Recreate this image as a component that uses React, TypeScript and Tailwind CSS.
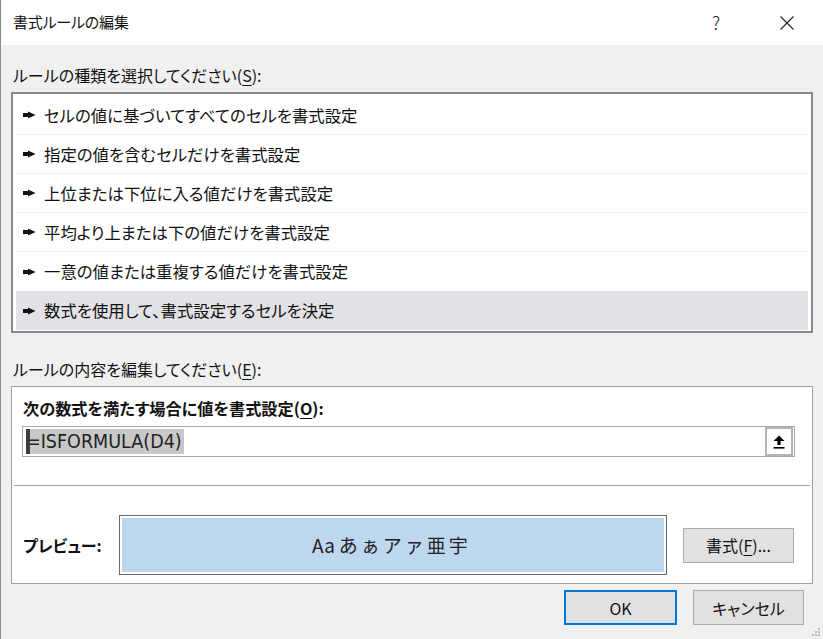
import type { ReactNode } from 'react'

const ruleTypes = [
  'セルの値に基づいてすべてのセルを書式設定',
  '指定の値を含むセルだけを書式設定',
  '上位または下位に入る値だけを書式設定',
  '平均より上または下の値だけを書式設定',
  '一意の値または重複する値だけを書式設定',
  '数式を使用して、書式設定するセルを決定',
]

const selectedIndex = 5

function Pointer() {
  return (
    <svg width="13" height="8" viewBox="0 0 13 8" className="shrink-0">
      <polygon points="0,2 5,2 5,0.5 12.5,4 5,7.5 5,6 0,6" fill="#111" />
    </svg>
  )
}

function Mnemonic({ children }: { children: ReactNode }) {
  return <span className="underline underline-offset-[3px]">{children}</span>
}

function WinButton({
  children,
  className = '',
}: {
  children: ReactNode
  className?: string
}) {
  return (
    <button
      type="button"
      className={`flex items-center justify-center bg-[#e1e1e1] text-[16px] text-[#111] ${className}`}
    >
      {children}
    </button>
  )
}

export default function App() {
  return (
    <div className="relative flex h-[639px] w-[823px] flex-col overflow-hidden border-l border-[#8a8a8a] bg-[#f0f0f0] font-['Noto_Sans_CJK_JP','Noto_Sans',sans-serif] text-[#111] [font-feature-settings:'palt']">
      {/* title bar */}
      <div className="flex h-[45px] shrink-0 items-center bg-white pl-[12px]">
        <span className="text-[15px] tracking-[-0.2px]">書式ルールの編集</span>
        <span className="ml-auto mr-[60px] text-[18px] font-light text-[#222]">?</span>
        <svg width="14" height="14" viewBox="0 0 14 14" className="mr-[29px]">
          <path d="M0.5 0.5 L13.5 13.5 M13.5 0.5 L0.5 13.5" stroke="#222" strokeWidth="1.1" />
        </svg>
      </div>

      <div className="flex flex-col px-[10px]">
        <div className="mt-[19px] h-[22px] pl-[2px] text-[16px] leading-[22px]">
          ルールの種類を選択してください(<Mnemonic>S</Mnemonic>):
        </div>

        {/* rule type list */}
        <div className="mt-[6px] flex h-[241px] w-[802px] flex-col border-2 border-[#8a8a8a] bg-white px-[3px] pt-[2px]">
          {ruleTypes.map((label, i) => (
            <div
              key={label}
              className={`flex h-[39px] shrink-0 items-center gap-[8px] pl-[7px] text-[16.4px] ${
                i === selectedIndex ? 'bg-[#e2e1e5]' : i < ruleTypes.length - 2 ? 'border-b border-[#f0f0f0]' : ''
              }`}
            >
              <Pointer />
              <span>{label}</span>
            </div>
          ))}
        </div>

        <div className="mt-[25px] h-[22px] pl-[2px] text-[16px] leading-[22px]">
          ルールの内容を編集してください(<Mnemonic>E</Mnemonic>):
        </div>

        {/* rule description */}
        <div className="mt-[6px] flex h-[198px] w-[802px] flex-col border border-[#a0a0a0] bg-white">
          <div className="mt-[10px] h-[22px] pl-[11px] text-[16.2px] font-bold leading-[22px]">
            次の数式を満たす場合に値を書式設定(<Mnemonic>O</Mnemonic>):
          </div>
          <div className="ml-[10px] mt-[7px] flex h-[31px] w-[773px] items-center border border-[#a9a9a9] bg-white">
            <span className="relative ml-[3px] flex h-[25px] items-center bg-[#c8c8c8] pr-[2px] font-['Liberation_Sans_Narrow','DejaVu_Sans_Condensed','Liberation_Sans',sans-serif] text-[19.5px] leading-[25px] text-[#222]">
              <span className="absolute left-0 top-0 h-[25px] w-[4px] bg-[#3c3c3c]" />
              =ISFORMULA(D4)
            </span>
            <span className="ml-auto mr-[1px] flex h-[29px] w-[28px] items-center justify-center border-2 border-[#b4b4b4] bg-white">
              <svg width="12" height="14" viewBox="0 0 12 14">
                <path d="M6 0.5 L11.5 6 H7.6 V10 H4.4 V6 H0.5 Z" fill="#000" />
                <rect x="0.5" y="12" width="11" height="1.6" fill="#000" />
              </svg>
            </span>
          </div>
          <div className="mx-[2px] mt-[28px] h-px bg-[#a0a0a0]" />

          {/* preview */}
          <div className="mt-[29px] flex items-center">
            <span className="ml-[11px] w-[96px] text-[16px] font-bold">プレビュー:</span>
            <div className="flex h-[60px] w-[548px] border border-[#6a6a6a] bg-white p-[2px]">
              <div className="flex flex-1 items-center justify-center bg-[#bdd7ee] pr-[3px] text-[19px] tracking-[3px] text-[#222] [font-feature-settings:normal]">
                <span className="tracking-[0px]">Aa</span>
                <span className="ml-[4px]">あぁアァ亜宇</span>
              </div>
            </div>
            <WinButton className="ml-[16px] h-[35px] w-[111px] border border-[#adadad]">
              書式(<Mnemonic>F</Mnemonic>)...
            </WinButton>
          </div>
        </div>

        {/* dialog buttons */}
        <div className="mt-[6px] flex justify-end gap-[16px] pr-[9px]">
          <WinButton className="h-[35px] w-[113px] border-2 border-[#0078d7]">OK</WinButton>
          <WinButton className="h-[35px] w-[111px] border border-[#adadad]">キャンセル</WinButton>
        </div>
      </div>

      {/* size grip */}
      <svg width="10" height="10" viewBox="0 0 10 10" className="absolute bottom-[2px] right-[2px]">
        {[
          [8, 2],
          [5, 5],
          [8, 5],
          [2, 8],
          [5, 8],
          [8, 8],
        ].map(([x, y]) => (
          <rect key={`${x}-${y}`} x={x - 1} y={y - 1} width="2" height="2" fill="#bdbdbd" />
        ))}
      </svg>
    </div>
  )
}
